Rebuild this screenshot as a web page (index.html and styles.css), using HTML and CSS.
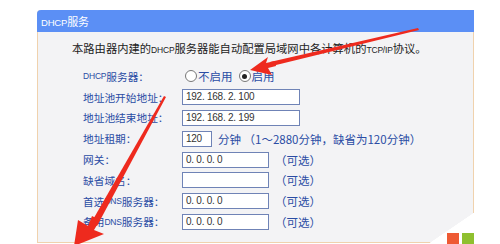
FILE: index.html
```html
<!DOCTYPE html>
<html lang="zh-CN">
<head>
<meta charset="utf-8">
<title>DHCP服务</title>
<link rel="stylesheet" href="styles.css">
</head>
<body>
<div class="page">
  <div class="panel">
    <div class="panel-head"><span class="lat">DHCP</span>服务</div>
    <div class="panel-body">
      <p class="intro">本路由器内建的<span class="lat">DHCP</span>服务器能自动配置局域网中各计算机的<span class="lat">TCP/IP</span>协议。</p>
      <div class="form">
        <div class="lbl"><span class="lat">DHCP</span>服务器：</div>
        <div class="ctl radios">
          <span class="radio"></span><span class="rtxt">不启用</span>
          <span class="radio on"></span><span class="rtxt">启用</span>
        </div>

        <div class="lbl">地址池开始地址：</div>
        <div class="ctl"><span class="field wide">192. 168. 2. 100</span></div>

        <div class="lbl">地址池结束地址：</div>
        <div class="ctl"><span class="field wide">192. 168. 2. 199</span></div>

        <div class="lbl">地址租期：</div>
        <div class="ctl"><span class="field short">120</span><span class="note">分钟 （1～2880分钟，缺省为120分钟）</span></div>

        <div class="lbl">网关：</div>
        <div class="ctl"><span class="field mid">0. 0. 0. 0</span><span class="opt">（可选）</span></div>

        <div class="lbl">缺省域名：</div>
        <div class="ctl"><span class="field mid"></span><span class="opt">（可选）</span></div>

        <div class="lbl">首选<span class="lat">DNS</span>服务器：</div>
        <div class="ctl"><span class="field mid">0. 0. 0. 0</span><span class="opt">（可选）</span></div>

        <div class="lbl">备用<span class="lat">DNS</span>服务器：</div>
        <div class="ctl"><span class="field mid">0. 0. 0. 0</span><span class="opt">（可选）</span></div>
      </div>
    </div>
    <div class="corner"></div>
    <div class="tiles"><span class="tile red"></span><span class="tile green"></span></div>
  </div>
  <svg class="arrows" width="500" height="244" viewBox="0 0 500 244">
    <polygon fill="#ee2a1e" points="418,28 419,30 272,66 270,62"/>
    <polygon fill="#ee2a1e" points="250,70 268,57 266,63 275,61 276,66 268,68 272,75"/>
    <polygon fill="#ee2a1e" points="164,96 166,97 97,226 91,223"/>
    <polygon fill="#ee2a1e" points="74,246 78,220 88,226 92,216 100,220 94,230 104,234"/>
  </svg>
</div>
</body>
</html>
```
FILE: styles.css
```css
html, body {
  margin: 0;
  padding: 0;
  background: #ffffff;
}
body {
  font-family: "Noto Sans CJK SC", "Noto Sans", sans-serif;
  font-size: 12px;
  color: #222;
}
.page {
  position: relative;
  width: 500px;
  height: 244px;
  overflow: hidden;
  padding-top: 10px;
  box-sizing: border-box;
}
.panel {
  position: relative;
  margin-left: 37px;
  width: 437px;
  height: 233px;
  box-sizing: border-box;
  border: 1px solid #f0d2ad;
  border-top: none;
  background: #f3f3f5;
  border-radius: 4px 0 0 0;
}
.panel-head {
  height: 22px;
  line-height: 22px;
  background: #5b8ff5;
  color: #fff;
  font-size: 11px;
  padding-left: 4px;
  border-radius: 4px 0 0 0;
  margin: 0 -1px 0 -1px;
}
.panel-head .lat {
  font-size: 9.5px;
}
.lat {
  font-family: "Liberation Sans", sans-serif;
  font-size: 8.5px;
  letter-spacing: -0.2px;
}
.panel-body {
  padding: 7px 0 0 34px;
}
.intro {
  margin: 0;
  height: 18px;
  line-height: 18px;
  font-size: 11.3px;
  color: #222;
}
.form {
  display: grid;
  grid-template-columns: 99px 1fr;
  grid-auto-rows: 20.8px;
  margin-top: 9px;
  margin-left: 11px;
  color: #2a4ca4;
  font-size: 10.7px;
}
.lbl, .ctl {
  display: flex;
  align-items: center;
  white-space: nowrap;
}
.radios {
  padding-left: 3px;
  font-size: 11.5px;
}
.radio {
  width: 10px;
  height: 10px;
  border: 1px solid #777;
  border-radius: 50%;
  background: #fff;
  position: relative;
  margin-right: 1px;
}
.radio.on::after {
  content: "";
  position: absolute;
  left: 2.5px;
  top: 2.5px;
  width: 5px;
  height: 5px;
  border-radius: 50%;
  background: #222;
}
.rtxt {
  margin-right: 6px;
}
.field {
  box-sizing: border-box;
  height: 16px;
  line-height: 14px;
  border: 1px solid #6f83b6;
  background: #fff;
  color: #333;
  font-family: "Liberation Sans", sans-serif;
  font-size: 10px;
  letter-spacing: -0.25px;
  padding-left: 3px;
}
.field.wide { width: 118px; }
.field.short { width: 30px; }
.field.mid { width: 87px; }
.note {
  margin-left: 6px;
  font-size: 11.5px;
}
.opt {
  margin-left: 6px;
  font-size: 11.5px;
}
.corner {
  position: absolute;
  right: -1px;
  bottom: -1px;
  width: 44px;
  height: 30px;
  background: linear-gradient(to top left, #ffffff 0%, #ffffff 50%, rgba(255,255,255,0) 51%);
}
.tiles {
  position: absolute;
  right: -1px;
  bottom: -3px;
  display: flex;
  gap: 3px;
}
.tile {
  width: 12px;
  height: 12px;
}
.tile.red { background: #ee5a34; }
.tile.green { background: #8fc02f; }
.arrows {
  position: absolute;
  left: 0;
  top: 0;
  pointer-events: none;
}
```
